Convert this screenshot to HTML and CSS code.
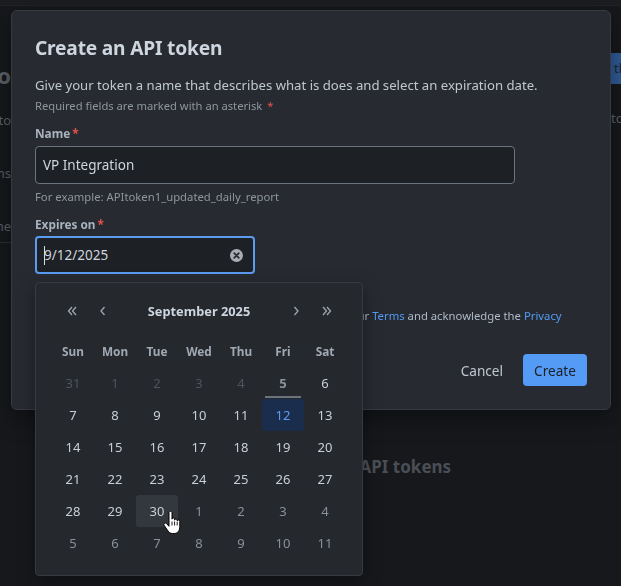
FILE: index.html
```html
<!DOCTYPE html>
<html lang="en">
<head>
    <meta charset="UTF-8">
    <meta name="viewport" content="width=device-width, initial-scale=1.0">
    <title>Create an API token</title>
    <link rel="stylesheet" href="styles.css">
</head>
<body>
    <div class="page">
        <div class="topbar"></div>
        <div class="page-body">
            <div class="side">
                <div class="side-title">Info</div>
                <div class="side-link">to</div>
                <div class="side-link">ns</div>
                <div class="side-link last">ne</div>
            </div>
            <div class="main">
                <h2 class="main-title"><span class="hidden-word">Your</span> API tokens</h2>
            </div>
            <div class="right">
                <div class="right-btn">th</div>
                <div class="right-link">to</div>
            </div>
        </div>
    </div>

    <div class="overlay">
        <div class="modal">
            <h1>Create an API token</h1>
            <p class="intro">Give your token a name that describes what is does and select an expiration date.</p>
            <p class="required">Required fields are marked with an asterisk <span class="star">*</span></p>

            <label class="field-label">Name<span class="star">*</span></label>
            <div class="input">VP Integration</div>
            <p class="hint">For example: APItoken1_updated_daily_report</p>

            <label class="field-label">Expires on<span class="star">*</span></label>
            <div class="date-wrap">
                <div class="input date-input">
                    <span class="caret"></span>9/12/2025
                    <svg class="clear" width="13" height="13" viewBox="0 0 13 13">
                        <circle cx="6.5" cy="6.5" r="6.5" fill="#a9adb3"/>
                        <path d="M4.2 4.2 L8.8 8.8 M8.8 4.2 L4.2 8.8" stroke="#2a2d32" stroke-width="1.8" stroke-linecap="round"/>
                    </svg>
                </div>

                <div class="calendar">
                    <div class="cal-head">
                        <button class="nav">
                            <svg width="12" height="12" viewBox="0 0 12 12"><path d="M6 2 L2.5 6 L6 10 M10 2 L6.5 6 L10 10" fill="none" stroke="#9ea7b1" stroke-width="1.3"/></svg>
                        </button>
                        <button class="nav">
                            <svg width="12" height="12" viewBox="0 0 12 12"><path d="M7.5 2 L4 6 L7.5 10" fill="none" stroke="#9ea7b1" stroke-width="1.3"/></svg>
                        </button>
                        <div class="cal-title">September 2025</div>
                        <button class="nav">
                            <svg width="12" height="12" viewBox="0 0 12 12"><path d="M4.5 2 L8 6 L4.5 10" fill="none" stroke="#9ea7b1" stroke-width="1.3"/></svg>
                        </button>
                        <button class="nav">
                            <svg width="12" height="12" viewBox="0 0 12 12"><path d="M2 2 L5.5 6 L2 10 M6 2 L9.5 6 L6 10" fill="none" stroke="#9ea7b1" stroke-width="1.3"/></svg>
                        </button>
                    </div>
                    <div class="cal-grid">
                        <div class="wd">Sun</div><div class="wd">Mon</div><div class="wd">Tue</div><div class="wd">Wed</div><div class="wd">Thu</div><div class="wd">Fri</div><div class="wd">Sat</div>

                        <div class="day off">31</div><div class="day off">1</div><div class="day off">2</div><div class="day off">3</div><div class="day off">4</div><div class="day today">5</div><div class="day">6</div>
                        <div class="day">7</div><div class="day">8</div><div class="day">9</div><div class="day">10</div><div class="day">11</div><div class="day selected">12</div><div class="day">13</div>
                        <div class="day">14</div><div class="day">15</div><div class="day">16</div><div class="day">17</div><div class="day">18</div><div class="day">19</div><div class="day">20</div>
                        <div class="day">21</div><div class="day">22</div><div class="day">23</div><div class="day">24</div><div class="day">25</div><div class="day">26</div><div class="day">27</div>
                        <div class="day">28</div><div class="day">29</div><div class="day hover">30
                            <svg class="hand" width="19" height="24" viewBox="0 0 19 24">
                                <path d="M6 1.6 C6 0.8 6.7 0.3 7.5 0.3 S9 0.8 9 1.6 V8.2 C9 7.4 9.6 6.9 10.3 6.9 S11.6 7.4 11.6 8.2 V9.2 C11.6 8.4 12.2 7.9 12.9 7.9 S14.2 8.4 14.2 9.2 V10.2 C14.2 9.5 14.8 9 15.5 9 S16.8 9.5 16.8 10.2 V15.5 C16.8 19.5 14.8 22.5 11.2 22.5 H9.4 C7.3 22.5 6 21.4 5 20 L1.2 14.4 C0.7 13.6 0.9 12.7 1.6 12.3 S3.2 12.1 3.8 12.8 L6 15.3 Z" fill="#ffffff" stroke="#000000" stroke-width="1"/>
                                <path d="M9 10.5 V14.5 M11.6 10.5 V14.5 M14.2 11 V14.5" stroke="#000000" stroke-width="0.9"/>
                            </svg>
                        </div><div class="day next">1</div><div class="day next">2</div><div class="day next">3</div><div class="day next">4</div>
                        <div class="day next">5</div><div class="day next">6</div><div class="day next">7</div><div class="day next">8</div><div class="day next">9</div><div class="day next">10</div><div class="day next">11</div>
                    </div>
                </div>
            </div>

            <p class="terms">By generating the API token, you confirm that you agree to our <a href="#">Terms</a> and acknowledge the <a href="#">Privacy Statement</a>.</p>

            <div class="actions">
                <button class="btn-cancel">Cancel</button>
                <button class="btn-create">Create</button>
            </div>
        </div>
    </div>
</body>
</html>
```

FILE: styles.css
```css
* {
    margin: 0;
    padding: 0;
    box-sizing: border-box;
}

body {
    font-family: 'Noto Sans', 'Open Sans', sans-serif;
    background: #16181c;
    width: 621px;
    height: 586px;
    overflow: hidden;
}

/* page behind the dialog */
.page {
    height: 100%;
}

.topbar {
    height: 6px;
    background: #1b1d21;
    border-bottom: 1px solid #202328;
}

.page-body {
    display: flex;
    justify-content: space-between;
}

.side {
    width: 11px;
    overflow: hidden;
    direction: rtl;
    white-space: nowrap;
    color: #5c6169;
}

.side-title {
    font-size: 22px;
    font-weight: bold;
    margin-top: 54px;
    line-height: 30px;
}

.side-link {
    font-size: 13px;
    line-height: 20px;
    margin-top: 33px;
}

.side-title + .side-link {
    margin-top: 20px;
}

.side-link.last {
    border-bottom: 1px solid #2b2e33;
    padding-bottom: 6px;
}

.main {
    flex: 1;
    padding-top: 449px;
    padding-left: 305px;
}

.main-title {
    font-size: 17px;
    font-weight: bold;
    color: #4a4e55;
    white-space: nowrap;
}

.right {
    width: 10px;
    overflow: hidden;
    white-space: nowrap;
    color: #5c6169;
    font-size: 13px;
}

.right-btn {
    margin-top: 47px;
    height: 31px;
    width: 40px;
    padding-left: 3px;
    line-height: 31px;
    background: #2f5a97;
    color: #1a2230;
}

.right-link {
    margin-top: 25px;
}

/* dialog */
.overlay {
    position: fixed;
    inset: 0;
    padding: 10px 10px 0 11px;
}

.modal {
    width: 600px;
    background: #272a30;
    border: 1px solid #363a41;
    border-radius: 6px;
    padding: 23px;
    box-shadow: 0 8px 24px rgba(0,0,0,0.4);
    color: #adbac7;
}

.modal h1 {
    font-size: 19.2px;
    font-weight: bold;
    color: #cdd5df;
    line-height: 28px;
    letter-spacing: -0.2px;
}

.intro {
    font-size: 13.15px;
    line-height: 20px;
    margin-top: 13px;
    color: #bfc8d2;
}

.required {
    font-size: 11.2px;
    line-height: 18px;
    margin-top: 2px;
    color: #8d96a0;
}

.star {
    color: #e5534b;
    margin-left: 2px;
}

.field-label {
    display: block;
    font-size: 11.8px;
    font-weight: bold;
    color: #a9b3be;
    line-height: 18px;
    margin-top: 9px;
}

.input {
    display: flex;
    align-items: center;
    height: 38px;
    width: 480px;
    margin-top: 4px;
    padding: 0 7px;
    border: 1px solid #6b737d;
    border-radius: 4px;
    background: #1d2024;
    font-size: 13.5px;
    color: #cdd5df;
}

.hint {
    font-size: 11.3px;
    line-height: 18px;
    margin-top: 4px;
    color: #8d96a0;
}

.date-wrap {
    position: relative;
}

.date-input {
    width: 220px;
    margin-top: 3px;
    border: 2px solid #5b9bf0;
    padding: 0 7px;
}

.caret {
    display: inline-block;
    width: 1px;
    height: 19px;
    background: #d6dde5;
    margin-right: -1px;
}

.clear {
    margin-left: auto;
    margin-right: 3px;
}

.terms {
    font-size: 11.3px;
    line-height: 18px;
    margin-top: 33px;
    color: #adbac7;
    padding-right: 22px;
}

.terms a {
    color: #539bf5;
    text-decoration: none;
}

.actions {
    display: flex;
    justify-content: flex-end;
    align-items: center;
    gap: 20px;
    margin-top: 11px;
}

.actions button {
    font-family: inherit;
    font-size: 13.6px;
    border: none;
    height: 32px;
    border-radius: 4px;
}

.btn-cancel {
    background: none;
    color: #bfc8d2;
}

.btn-create {
    background: #539bf5;
    color: #1c2128;
    width: 64px;
}

/* date picker popup */
.calendar {
    position: absolute;
    top: calc(100% + 8px);
    left: 0;
    z-index: 2;
    width: 328px;
    background: #25282d;
    border: 1px solid #363a41;
    border-radius: 4px;
    padding: 12px 16px 16px 16px;
    box-shadow: 0 6px 18px rgba(0,0,0,0.35);
}

.cal-head {
    display: flex;
    align-items: center;
    height: 32px;
    padding: 0 4px;
}

.nav {
    width: 31px;
    height: 28px;
    background: none;
    border: none;
    display: flex;
    align-items: center;
    justify-content: center;
}

.cal-title {
    flex: 1;
    text-align: center;
    font-size: 12.8px;
    font-weight: bold;
    color: #cdd5df;
}

.cal-grid {
    display: grid;
    grid-template-columns: repeat(7, 42px);
    grid-auto-rows: 32px;
    margin-top: 8px;
}

.wd {
    display: flex;
    align-items: center;
    justify-content: center;
    font-size: 11.8px;
    font-weight: bold;
    color: #a0a9b3;
}

.day {
    position: relative;
    display: flex;
    align-items: center;
    justify-content: center;
    font-size: 13px;
    color: #c8cfd7;
    border-radius: 3px;
}

.day.off {
    color: #4f555d;
}

.day.today {
    color: #8a929b;
    font-weight: bold;
}

.day.today::after {
    content: "";
    position: absolute;
    left: 3px;
    right: 3px;
    bottom: 1px;
    height: 2px;
    background: #6b737d;
}

.day.selected {
    background: #1b2d4c;
    color: #5b9bf0;
}

.day.hover {
    background: #33373e;
}

.day.next {
    color: #8a9199;
}

.hand {
    position: absolute;
    left: 27px;
    top: 16px;
}
```
